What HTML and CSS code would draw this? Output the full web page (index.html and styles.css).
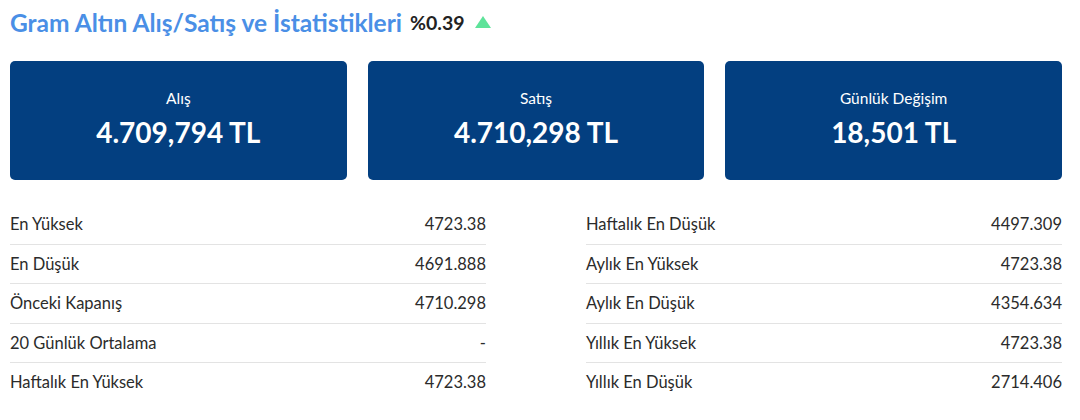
FILE: index.html
```html
<!DOCTYPE html>
<html lang="tr">
<head>
  <meta charset="UTF-8">
  <meta name="viewport" content="width=device-width, initial-scale=1.0">
  <title>Gram Altın</title>
  <link rel="stylesheet" href="styles.css">
</head>
<body>
  <div class="gold-box">
    <h2 class="title">
      Gram Altın Alış/Satış ve İstatistikleri
      <span class="change">%0.39</span>
      <span class="arrow-up"></span>
    </h2>

    <!-- Price cards -->
    <div class="cards">
      <div class="card">
        <div class="card-label">Alış</div>
        <div class="card-value">4.709,794 TL</div>
      </div>
      <div class="card">
        <div class="card-label">Satış</div>
        <div class="card-value">4.710,298 TL</div>
      </div>
      <div class="card">
        <div class="card-label">Günlük Değişim</div>
        <div class="card-value">18,501 TL</div>
      </div>
    </div>

    <!-- Statistics -->
    <div class="stats">
      <ul class="stats-list">
        <li class="stat"><span>En Yüksek</span><span>4723.38</span></li>
        <li class="stat"><span>En Düşük</span><span>4691.888</span></li>
        <li class="stat"><span>Önceki Kapanış</span><span>4710.298</span></li>
        <li class="stat"><span>20 Günlük Ortalama</span><span>-</span></li>
        <li class="stat"><span>Haftalık En Yüksek</span><span>4723.38</span></li>
      </ul>
      <ul class="stats-list">
        <li class="stat"><span>Haftalık En Düşük</span><span>4497.309</span></li>
        <li class="stat"><span>Aylık En Yüksek</span><span>4723.38</span></li>
        <li class="stat"><span>Aylık En Düşük</span><span>4354.634</span></li>
        <li class="stat"><span>Yıllık En Yüksek</span><span>4723.38</span></li>
        <li class="stat"><span>Yıllık En Düşük</span><span>2714.406</span></li>
      </ul>
    </div>
  </div>
</body>
</html>
```

FILE: styles.css
```css
body {
  font-family: 'Lato', 'Liberation Sans', sans-serif;
  margin: 0;
  padding: 0;
  background-color: #ffffff;
  color: #222222;
}

.gold-box {
  padding: 8px 18px 0 10px;
}

.title {
  margin: 0;
  height: 28px;
  display: flex;
  align-items: center;
  gap: 8px;
  font-size: 24.5px;
  font-weight: bold;
  color: #4a8fe6;
}

.change {
  font-size: 19.5px;
  color: #222222;
}

.arrow-up {
  width: 0;
  height: 0;
  border-left: 8px solid transparent;
  border-right: 8px solid transparent;
  border-bottom: 12px solid #5ee39a;
  margin-left: 2px;
}

.cards {
  display: grid;
  grid-template-columns: repeat(3, 1fr);
  gap: 21px;
  margin-top: 25px;
}

.card {
  background-color: #033f80;
  color: #ffffff;
  border-radius: 5px;
  height: 119px;
  display: flex;
  flex-direction: column;
  justify-content: center;
  align-items: center;
}

.card-label {
  font-size: 15.5px;
  margin-bottom: 8px;
  margin-top: -3px;
}

.card-value {
  font-size: 28px;
  font-weight: bold;
}

.stats {
  display: grid;
  grid-template-columns: 1fr 1fr;
  gap: 100px;
  margin-top: 25px;
}

.stats-list {
  list-style: none;
  padding: 0;
  margin: 0;
}

.stat {
  display: flex;
  justify-content: space-between;
  align-items: center;
  height: 38.5px;
  font-size: 16.5px;
  color: #2b2b2b;
  border-bottom: 1px solid #e3e3e3;
}

.stat:last-child {
  border-bottom: none;
}
```
